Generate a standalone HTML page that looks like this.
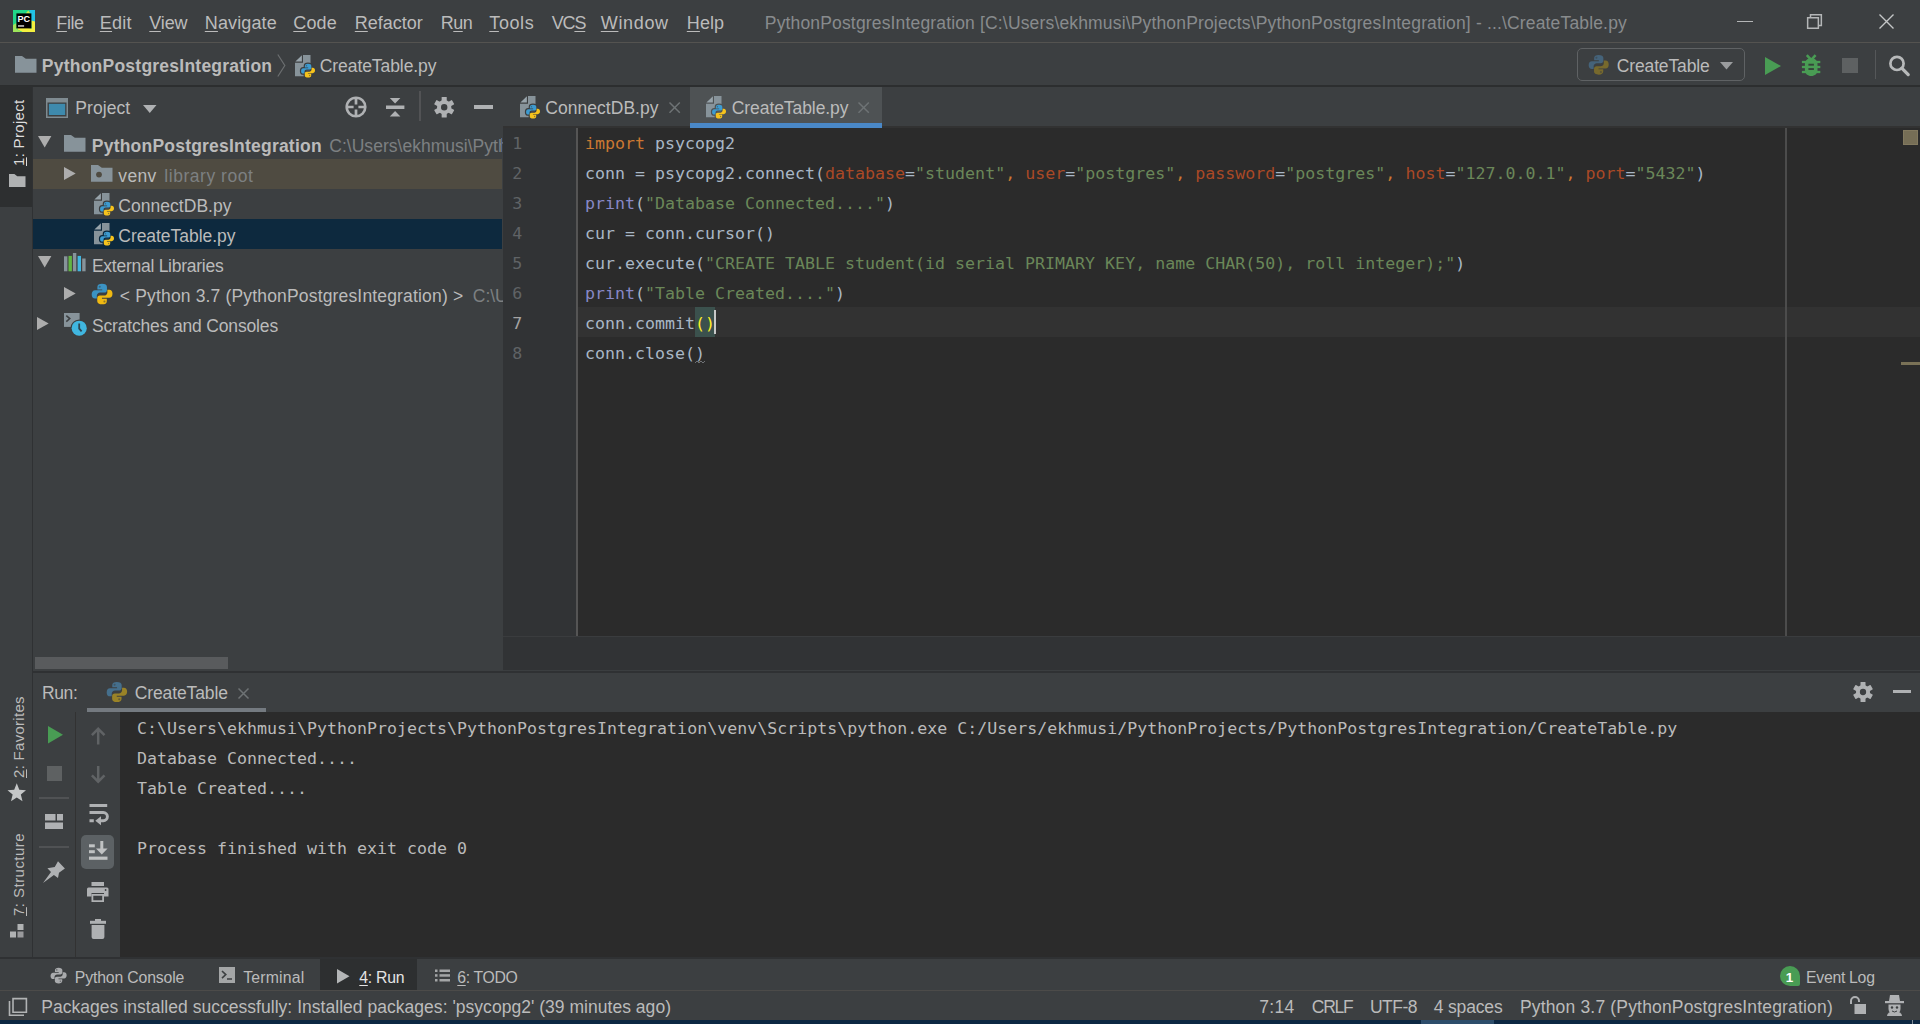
<!DOCTYPE html>
<html lang="en"><head><meta charset="utf-8"><title>PythonPostgresIntegration - CreateTable.py</title>
<style>
html,body{margin:0;padding:0}
body{width:1920px;height:1024px;overflow:hidden;position:relative;background:#3c3f41;font-family:"Liberation Sans",sans-serif;color:#bbb}
div,span,svg{position:absolute;box-sizing:border-box}
.t{white-space:pre}
.t u{text-decoration:underline;text-underline-offset:2px;text-decoration-thickness:1px}
.v{transform-origin:0 0;transform:rotate(-90deg)}
.i{overflow:visible}
.cl,.col{left:585px;margin-top:0.5px;height:30px;line-height:30px;font:16.6px/30px "DejaVu Sans Mono","Liberation Mono",monospace;color:#a9b7c6;white-space:pre;letter-spacing:.012px}
.cl span,.cl{position:absolute}.cl span{position:static}
.col{left:137px;color:#bbbbbb}
.ln{left:503px;margin-top:0.5px;width:30px;height:30px;font:16.6px/30px "DejaVu Sans Mono","Liberation Mono",monospace;color:#606366;padding-left:9.2px}
.ln.cur{color:#a4a3a3}
.br{color:#ffef28}
</style></head><body>

<!-- ===== menu bar ===== -->
<div id="menubar" style="left:0;top:0;width:1920px;height:42px;background:#3c3f41"></div>
<div style="left:0;top:42px;width:1920px;height:1px;background:#545350"></div>
<svg class="i" style="left:13px;top:10px" width="22" height="22" viewBox="0 0 22 22"><rect width="22" height="22" fill="#21d789"/><path fill="#22c3e6" d="M16.5 0H22V16L18 11Z"/><path fill="#f3ef3f" d="M22 11.5V22H9.5L5 19.8L3 16L18.6 18.4L18.4 10.5Z"/><path fill="#9fe55a" d="M0 15L3.4 13V18.5L8 22H0Z"/><path fill="#c7e84a" d="M12.6 3.4L15.3 0.6L17.5 3.4Z"/><rect x="3.4" y="3.4" width="15" height="15" fill="#000"/><rect x="5" y="15" width="6.1" height="1.9" fill="#a3a3a3"/><text x="4.4" y="12.1" font-family="Liberation Sans, sans-serif" font-size="9.8" font-weight="bold" fill="#ffffff" textLength="12.6" lengthAdjust="spacingAndGlyphs">PC</text></svg>
<span class="t" style="left:56.30px;top:12.26px;font-size:18px;line-height:23px;color:#bbbbbb;letter-spacing:-0.400px;"><u>F</u>ile</span><span class="t" style="left:99.80px;top:12.26px;font-size:18px;line-height:23px;color:#bbbbbb;letter-spacing:0.225px;"><u>E</u>dit</span><span class="t" style="left:149.30px;top:12.26px;font-size:18px;line-height:23px;color:#bbbbbb;letter-spacing:-0.150px;"><u>V</u>iew</span><span class="t" style="left:204.80px;top:12.26px;font-size:18px;line-height:23px;color:#bbbbbb;letter-spacing:0.113px;"><u>N</u>avigate</span><span class="t" style="left:293.30px;top:12.26px;font-size:18px;line-height:23px;color:#bbbbbb;letter-spacing:0.100px;"><u>C</u>ode</span><span class="t" style="left:354.80px;top:12.26px;font-size:18px;line-height:23px;color:#bbbbbb;letter-spacing:-0.012px;"><u>R</u>efactor</span><span class="t" style="left:440.80px;top:12.26px;font-size:18px;line-height:23px;color:#bbbbbb;letter-spacing:-0.533px;">R<u>u</u>n</span><span class="t" style="left:489.30px;top:12.26px;font-size:18px;line-height:23px;color:#bbbbbb;letter-spacing:0.580px;"><u>T</u>ools</span><span class="t" style="left:551.80px;top:12.26px;font-size:18px;line-height:23px;color:#bbbbbb;letter-spacing:-1.200px;">VC<u>S</u></span><span class="t" style="left:600.80px;top:12.26px;font-size:18px;line-height:23px;color:#bbbbbb;letter-spacing:0.650px;"><u>W</u>indow</span><span class="t" style="left:686.80px;top:12.26px;font-size:18px;line-height:23px;color:#bbbbbb;letter-spacing:0.100px;"><u>H</u>elp</span>
<span class="t" style="left:764.80px;top:12.44px;font-size:17.5px;line-height:23px;color:#888b8d;letter-spacing:0.159px;">PythonPostgresIntegration [C:\Users\ekhmusi\PythonProjects\PythonPostgresIntegration] - ...\CreateTable.py</span>
<div style="left:1737px;top:21.2px;width:16px;height:1.3px;background:#b4b6b7"></div>
<svg class="i" style="left:1807.3px;top:13.5px" width="15.3" height="15.3" viewBox="0 0 15.3 15.3"><path fill="none" stroke="#b4b6b7" stroke-width="1.5" d="M0.65 3.65H11.35V14.35H0.65ZM3.5 3.5V0.65H14.35V11.5H11.5"/></svg>
<svg class="i" style="left:1879px;top:14px" width="15" height="15" viewBox="0 0 15 15"><path fill="none" stroke="#c4c6c7" stroke-width="1.4" d="M0.5 0.5L14.5 14.5M14.5 0.5L0.5 14.5"/></svg>

<!-- ===== navigation bar ===== -->
<div id="navbar" style="left:0;top:43px;width:1920px;height:42px;background:#3c3f41"></div>
<svg class="i" style="left:15px;top:56px" width="21.5" height="16.8" viewBox="0 0 21.5 16.8"><path fill="#87939a" d="M0 0H7L10.8 2.8H21.5V16.8H0Z"/></svg>
<span class="t" style="left:41.80px;top:55.44px;font-size:17.5px;line-height:23px;color:#bbbbbb;font-weight:bold;letter-spacing:0.236px;">PythonPostgresIntegration</span>
<svg class="i" style="left:276.6px;top:53.5px" width="9" height="23" viewBox="0 0 9 23"><path fill="none" stroke="#6b6e70" stroke-width="1.2" d="M0.8 0.5L7.8 11.5L0.8 22.5"/></svg>
<svg class="i" style="left:295px;top:54.5px" width="21" height="23.5" viewBox="0 0 21 23.5"><path fill="#87939a" d="M8 0H15.5V21.3H0V7.8H8Z"/><path fill="#98a4ab" d="M6.9 0.3V6.4H0.4Z"/><g transform="translate(5.6,8.2) scale(0.93)"><g fill="#3c3f41" stroke="#3c3f41" stroke-width="2.6" stroke-linejoin="round"><path fill="#3c3f41" d="M7.9 0.6C5.9 0.6 4.6 1.4 4.6 2.9V4.6H8.1V5.3H2.9C1.4 5.3 0.5 6.5 0.5 8.3C0.5 10.1 1.4 11.2 2.9 11.2H4.2V9.2C4.2 7.9 5.3 6.9 6.6 6.9H9.6C10.7 6.9 11.5 6.1 11.5 5V2.9C11.5 1.5 10.2 0.6 7.9 0.6Z"/><path fill="#3c3f41" d="M8.1 15.4C10.1 15.4 11.4 14.6 11.4 13.1V11.4H7.9V10.7H13.1C14.6 10.7 15.5 9.5 15.5 7.7C15.5 5.9 14.6 4.8 13.1 4.8H11.8V6.8C11.8 8.1 10.7 9.1 9.4 9.1H6.4C5.3 9.1 4.5 9.9 4.5 11V13.1C4.5 14.5 5.8 15.4 8.1 15.4Z"/><circle cx="6.3" cy="2.7" r="0.75" fill="#3c3f41" opacity=".55"/><circle cx="9.7" cy="13.3" r="0.75" fill="#3c3f41" opacity=".55"/></g><path fill="#3d9bd0" d="M7.9 0.6C5.9 0.6 4.6 1.4 4.6 2.9V4.6H8.1V5.3H2.9C1.4 5.3 0.5 6.5 0.5 8.3C0.5 10.1 1.4 11.2 2.9 11.2H4.2V9.2C4.2 7.9 5.3 6.9 6.6 6.9H9.6C10.7 6.9 11.5 6.1 11.5 5V2.9C11.5 1.5 10.2 0.6 7.9 0.6Z"/><path fill="#f6c31c" d="M8.1 15.4C10.1 15.4 11.4 14.6 11.4 13.1V11.4H7.9V10.7H13.1C14.6 10.7 15.5 9.5 15.5 7.7C15.5 5.9 14.6 4.8 13.1 4.8H11.8V6.8C11.8 8.1 10.7 9.1 9.4 9.1H6.4C5.3 9.1 4.5 9.9 4.5 11V13.1C4.5 14.5 5.8 15.4 8.1 15.4Z"/><circle cx="6.3" cy="2.7" r="0.75" fill="#3c3f41" opacity=".55"/><circle cx="9.7" cy="13.3" r="0.75" fill="#3c3f41" opacity=".55"/></g></svg>
<span class="t" style="left:319.80px;top:55.44px;font-size:17.5px;line-height:23px;color:#bbbbbb;letter-spacing:-0.079px;">CreateTable.py</span>
<div style="left:1577px;top:48px;width:167.5px;height:33px;border:1.5px solid #5f6264;border-radius:5px;background:#3c3f41"></div>
<svg class="i" style="left:1588.3px;top:54px" width="21.4" height="21.6" viewBox="0 0 16 16"><path fill="#45637a" d="M7.9 0.6C5.9 0.6 4.6 1.4 4.6 2.9V4.6H8.1V5.3H2.9C1.4 5.3 0.5 6.5 0.5 8.3C0.5 10.1 1.4 11.2 2.9 11.2H4.2V9.2C4.2 7.9 5.3 6.9 6.6 6.9H9.6C10.7 6.9 11.5 6.1 11.5 5V2.9C11.5 1.5 10.2 0.6 7.9 0.6Z"/><path fill="#77692d" d="M8.1 15.4C10.1 15.4 11.4 14.6 11.4 13.1V11.4H7.9V10.7H13.1C14.6 10.7 15.5 9.5 15.5 7.7C15.5 5.9 14.6 4.8 13.1 4.8H11.8V6.8C11.8 8.1 10.7 9.1 9.4 9.1H6.4C5.3 9.1 4.5 9.9 4.5 11V13.1C4.5 14.5 5.8 15.4 8.1 15.4Z"/><circle cx="6.3" cy="2.7" r="0.75" fill="#3c3f41" opacity=".55"/><circle cx="9.7" cy="13.3" r="0.75" fill="#3c3f41" opacity=".55"/></svg>
<span class="t" style="left:1616.80px;top:55.44px;font-size:17.5px;line-height:23px;color:#bbbbbb;letter-spacing:-0.145px;">CreateTable</span>
<svg class="i" style="left:1720px;top:61.5px" width="13" height="7.4" viewBox="0 0 13 7.4"><path fill="#9a9c9e" d="M0 0H13L6.5 7.4Z"/></svg>
<svg class="i" style="left:1765px;top:57px" width="16" height="18" viewBox="0 0 16 18"><path fill="#499c54" d="M0 0L16 9L0 18Z"/></svg>
<svg class="i" style="left:1801px;top:54px" width="20" height="23" viewBox="0 0 20 23"><g fill="#499c54"><path d="M10.2 4C13.7 4 16.5 6.6 16.5 10V16.5C16.5 19.6 13.7 22 10.2 22C6.7 22 3.9 19.6 3.9 16.5V10C3.9 6.6 6.7 4 10.2 4Z"/><rect x="0.9" y="6.85" width="18.4" height="2.3"/><rect x="0.9" y="11.85" width="18.4" height="2.3"/><rect x="0.9" y="16.85" width="18.4" height="2.3"/></g><path stroke="#499c54" stroke-width="2.5" d="M5.8 1.1L10.2 5.8L14.6 1.1" fill="none"/><rect x="7.4" y="9.75" width="5.5" height="1.9" fill="#35443a"/><rect x="7.4" y="14.1" width="5.5" height="1.9" fill="#35443a"/></svg>
<div style="left:1842px;top:58px;width:16px;height:15px;background:#5e6162"></div>
<div style="left:1875px;top:50px;width:1px;height:29px;background:#555759"></div>
<svg class="i" style="left:1889px;top:55px" width="21" height="21" viewBox="0 0 21 21"><circle cx="8" cy="8.4" r="6.6" fill="none" stroke="#b7b9ba" stroke-width="2.7"/><path stroke="#b7b9ba" stroke-width="3.3" stroke-linecap="round" d="M13 13.4L19.2 19.6"/></svg>

<div style="left:0;top:85px;width:1920px;height:2px;background:#2c2e2f"></div>

<!-- ===== left tool strip ===== -->
<div id="leftstrip" style="left:0;top:87px;width:32px;height:870px;background:#3c3f41"></div>
<div style="left:32px;top:87px;width:1px;height:870px;background:#2f3133"></div>
<div style="left:0;top:86px;width:32px;height:121px;background:#2d2f30"></div>
<span class="t v" style="left:9.00px;top:165.70px;font-size:15px;line-height:20px;color:#dcdcdc;letter-spacing:0.310px;"><u>1</u>: Project</span>
<svg class="i" style="left:8.6px;top:174px" width="16.5" height="13" viewBox="0 0 21.5 16.8"><path fill="#b0b2b3" d="M0 0H7L10.8 2.8H21.5V16.8H0Z"/></svg>
<span class="t v" style="left:9.00px;top:778.00px;font-size:15px;line-height:20px;color:#bbbbbb;letter-spacing:0.292px;"><u>2</u>: Favorites</span>
<svg class="i" style="left:7px;top:783px" width="19.5" height="18.5" viewBox="0 0 20 18.5"><path fill="#c4c6c7" d="M10 0L12.6 6.6L19.5 7.1L14.2 11.6L15.9 18.5L10 14.7L4.1 18.5L5.8 11.6L0.5 7.1L7.4 6.6Z"/></svg>
<span class="t v" style="left:9.00px;top:916.00px;font-size:15px;line-height:20px;color:#bbbbbb;letter-spacing:0.458px;"><u>7</u>: Structure</span>
<svg class="i" style="left:10px;top:924px" width="14" height="13.5" viewBox="0 0 14 13.5"><g fill="#b0b2b3"><rect x="7.5" y="0" width="6" height="6"/><rect x="0" y="7.5" width="6" height="6"/><rect x="7.5" y="7.5" width="6" height="6" opacity=".8"/></g></svg>

<!-- ===== project tool window ===== -->
<div id="project" style="left:33px;top:87px;width:470px;height:584px;background:#3c3f41"></div>
<svg class="i" style="left:46px;top:98px" width="22" height="20" viewBox="0 0 22 20"><rect x="0.75" y="0.75" width="20.5" height="18.5" fill="#3c3f41" stroke="#7f8b91" stroke-width="1.5"/><rect x="0" y="0" width="22" height="4.5" fill="#7f8b91"/><rect x="2.9" y="5.8" width="16.3" height="11.2" fill="#3e8aad"/></svg>
<span class="t" style="left:75.30px;top:97.44px;font-size:17.5px;line-height:23px;color:#bbbbbb;letter-spacing:0.057px;">Project</span>
<svg class="i" style="left:142.5px;top:105px" width="13.5" height="8" viewBox="0 0 13.5 8"><path fill="#afb1b3" d="M0 0H13.5L6.75 8Z"/></svg>
<svg class="i" style="left:345px;top:96.1px" width="22" height="22" viewBox="0 0 22 22"><circle cx="11" cy="11" r="9.3" fill="none" stroke="#afb1b3" stroke-width="2.6"/><path stroke="#afb1b3" stroke-width="2.7" d="M11 1V8.6M11 13.4V21M1 11H8.6M13.4 11H21"/></svg>
<svg class="i" style="left:386px;top:97.7px" width="18.4" height="18.6" viewBox="0 0 18.4 18.6"><path fill="#afb1b3" d="M0 7.6H18.4V10.9H0ZM3.8 0H14.4L9.1 5.6ZM3.8 18.6H14.4L9.1 13Z"/></svg>
<div style="left:419px;top:91px;width:2px;height:30px;background:#525355"></div>
<svg class="i" style="left:433.9px;top:96.8px" width="20.4" height="20.4" viewBox="0 0 20 20"><g fill="#afb1b3"><rect x="7.5" y="0" width="5" height="6" rx=".5" transform="rotate(0 10 10)"/><rect x="7.5" y="0" width="5" height="6" rx=".5" transform="rotate(60 10 10)"/><rect x="7.5" y="0" width="5" height="6" rx=".5" transform="rotate(120 10 10)"/><rect x="7.5" y="0" width="5" height="6" rx=".5" transform="rotate(180 10 10)"/><rect x="7.5" y="0" width="5" height="6" rx=".5" transform="rotate(240 10 10)"/><rect x="7.5" y="0" width="5" height="6" rx=".5" transform="rotate(300 10 10)"/></g><circle cx="10" cy="10" r="5.1" fill="none" stroke="#afb1b3" stroke-width="3.9"/></svg>
<div style="left:474px;top:105.2px;width:18.5px;height:3.4px;background:#afb1b3"></div>

<div style="left:33px;top:159px;width:469px;height:30px;background:#4f4b41"></div>
<div style="left:33px;top:219px;width:469px;height:30px;background:#0d293e"></div>
<svg class="i" style="left:37.6px;top:136.2px" width="13.4" height="11.6" viewBox="0 0 13.4 11.6"><path fill="#adadad" d="M0 0H13.4L6.7 11.6Z"/></svg>
<svg class="i" style="left:64.3px;top:135.2px" width="21.5" height="16.8" viewBox="0 0 21.5 16.8"><path fill="#87939a" d="M0 0H7L10.8 2.8H21.5V16.8H0Z"/></svg>
<span class="t" style="left:91.80px;top:135.44px;font-size:17.5px;line-height:23px;color:#bbbbbb;font-weight:bold;letter-spacing:0.216px;">PythonPostgresIntegration</span>
<div style="left:328px;top:129px;width:175px;height:30px;overflow:hidden"><span class="t" style="left:1.30px;top:6.44px;font-size:17.5px;line-height:23px;color:#7d8082;letter-spacing:0.019px;">C:\Users\ekhmusi\Pyth</span></div>
<svg class="i" style="left:64px;top:167px" width="11.7" height="13" viewBox="0 0 11.7 13"><path fill="#adadad" d="M0 0L11.7 6.5L0 13Z"/></svg>
<svg class="i" style="left:91.2px;top:165px" width="21.5" height="16.8" viewBox="0 0 21.5 16.8"><path fill="#87939a" d="M0 0H7L10.8 2.8H21.5V16.8H0Z"/><circle cx="8" cy="9.6" r="2.9" fill="#4f4b41"/></svg>
<span class="t" style="left:118.30px;top:165.44px;font-size:17.5px;line-height:23px;color:#bbbbbb;letter-spacing:0.350px;">venv</span>
<span class="t" style="left:164.30px;top:165.44px;font-size:17.5px;line-height:23px;color:#7d8082;letter-spacing:0.533px;">library root</span>
<svg class="i" style="left:94.25px;top:193.3px" width="21" height="23.5" viewBox="0 0 21 23.5"><path fill="#87939a" d="M8 0H15.5V21.3H0V7.8H8Z"/><path fill="#98a4ab" d="M6.9 0.3V6.4H0.4Z"/><g transform="translate(5.6,8.2) scale(0.93)"><g fill="#3c3f41" stroke="#3c3f41" stroke-width="2.6" stroke-linejoin="round"><path fill="#3c3f41" d="M7.9 0.6C5.9 0.6 4.6 1.4 4.6 2.9V4.6H8.1V5.3H2.9C1.4 5.3 0.5 6.5 0.5 8.3C0.5 10.1 1.4 11.2 2.9 11.2H4.2V9.2C4.2 7.9 5.3 6.9 6.6 6.9H9.6C10.7 6.9 11.5 6.1 11.5 5V2.9C11.5 1.5 10.2 0.6 7.9 0.6Z"/><path fill="#3c3f41" d="M8.1 15.4C10.1 15.4 11.4 14.6 11.4 13.1V11.4H7.9V10.7H13.1C14.6 10.7 15.5 9.5 15.5 7.7C15.5 5.9 14.6 4.8 13.1 4.8H11.8V6.8C11.8 8.1 10.7 9.1 9.4 9.1H6.4C5.3 9.1 4.5 9.9 4.5 11V13.1C4.5 14.5 5.8 15.4 8.1 15.4Z"/><circle cx="6.3" cy="2.7" r="0.75" fill="#3c3f41" opacity=".55"/><circle cx="9.7" cy="13.3" r="0.75" fill="#3c3f41" opacity=".55"/></g><path fill="#3d9bd0" d="M7.9 0.6C5.9 0.6 4.6 1.4 4.6 2.9V4.6H8.1V5.3H2.9C1.4 5.3 0.5 6.5 0.5 8.3C0.5 10.1 1.4 11.2 2.9 11.2H4.2V9.2C4.2 7.9 5.3 6.9 6.6 6.9H9.6C10.7 6.9 11.5 6.1 11.5 5V2.9C11.5 1.5 10.2 0.6 7.9 0.6Z"/><path fill="#f6c31c" d="M8.1 15.4C10.1 15.4 11.4 14.6 11.4 13.1V11.4H7.9V10.7H13.1C14.6 10.7 15.5 9.5 15.5 7.7C15.5 5.9 14.6 4.8 13.1 4.8H11.8V6.8C11.8 8.1 10.7 9.1 9.4 9.1H6.4C5.3 9.1 4.5 9.9 4.5 11V13.1C4.5 14.5 5.8 15.4 8.1 15.4Z"/><circle cx="6.3" cy="2.7" r="0.75" fill="#3c3f41" opacity=".55"/><circle cx="9.7" cy="13.3" r="0.75" fill="#3c3f41" opacity=".55"/></g></svg>
<span class="t" style="left:118.30px;top:195.44px;font-size:17.5px;line-height:23px;color:#bbbbbb;letter-spacing:0.033px;">ConnectDB.py</span>
<svg class="i" style="left:94.25px;top:223.3px" width="21" height="23.5" viewBox="0 0 21 23.5"><path fill="#87939a" d="M8 0H15.5V21.3H0V7.8H8Z"/><path fill="#98a4ab" d="M6.9 0.3V6.4H0.4Z"/><g transform="translate(5.6,8.2) scale(0.93)"><g fill="#0d293e" stroke="#0d293e" stroke-width="2.6" stroke-linejoin="round"><path fill="#0d293e" d="M7.9 0.6C5.9 0.6 4.6 1.4 4.6 2.9V4.6H8.1V5.3H2.9C1.4 5.3 0.5 6.5 0.5 8.3C0.5 10.1 1.4 11.2 2.9 11.2H4.2V9.2C4.2 7.9 5.3 6.9 6.6 6.9H9.6C10.7 6.9 11.5 6.1 11.5 5V2.9C11.5 1.5 10.2 0.6 7.9 0.6Z"/><path fill="#0d293e" d="M8.1 15.4C10.1 15.4 11.4 14.6 11.4 13.1V11.4H7.9V10.7H13.1C14.6 10.7 15.5 9.5 15.5 7.7C15.5 5.9 14.6 4.8 13.1 4.8H11.8V6.8C11.8 8.1 10.7 9.1 9.4 9.1H6.4C5.3 9.1 4.5 9.9 4.5 11V13.1C4.5 14.5 5.8 15.4 8.1 15.4Z"/><circle cx="6.3" cy="2.7" r="0.75" fill="#3c3f41" opacity=".55"/><circle cx="9.7" cy="13.3" r="0.75" fill="#3c3f41" opacity=".55"/></g><path fill="#3d9bd0" d="M7.9 0.6C5.9 0.6 4.6 1.4 4.6 2.9V4.6H8.1V5.3H2.9C1.4 5.3 0.5 6.5 0.5 8.3C0.5 10.1 1.4 11.2 2.9 11.2H4.2V9.2C4.2 7.9 5.3 6.9 6.6 6.9H9.6C10.7 6.9 11.5 6.1 11.5 5V2.9C11.5 1.5 10.2 0.6 7.9 0.6Z"/><path fill="#f6c31c" d="M8.1 15.4C10.1 15.4 11.4 14.6 11.4 13.1V11.4H7.9V10.7H13.1C14.6 10.7 15.5 9.5 15.5 7.7C15.5 5.9 14.6 4.8 13.1 4.8H11.8V6.8C11.8 8.1 10.7 9.1 9.4 9.1H6.4C5.3 9.1 4.5 9.9 4.5 11V13.1C4.5 14.5 5.8 15.4 8.1 15.4Z"/><circle cx="6.3" cy="2.7" r="0.75" fill="#3c3f41" opacity=".55"/><circle cx="9.7" cy="13.3" r="0.75" fill="#3c3f41" opacity=".55"/></g></svg>
<span class="t" style="left:118.30px;top:225.44px;font-size:17.5px;line-height:23px;color:#bbbbbb;letter-spacing:-0.043px;">CreateTable.py</span>
<svg class="i" style="left:37.6px;top:255.9px" width="13.4" height="11.6" viewBox="0 0 13.4 11.6"><path fill="#adadad" d="M0 0H13.4L6.7 11.6Z"/></svg>
<svg class="i" style="left:64.3px;top:253.3px" width="21.6" height="18.3" viewBox="0 0 21.6 18.3"><g fill="#87939a"><rect x="0" y="3.3" width="3.4" height="15"/><rect x="8.9" y="0" width="3.4" height="18.3"/><rect x="18.2" y="5.5" width="3.4" height="12.8"/></g><rect x="4.5" y="2.9" width="3.4" height="15.4" fill="#62b543"/><rect x="13.6" y="2.9" width="3.4" height="15.4" fill="#40b6e0"/></svg>
<span class="t" style="left:91.90px;top:255.44px;font-size:17.5px;line-height:23px;color:#bbbbbb;letter-spacing:-0.256px;">External Libraries</span>
<svg class="i" style="left:64px;top:287px" width="11.7" height="13" viewBox="0 0 11.7 13"><path fill="#adadad" d="M0 0L11.7 6.5L0 13Z"/></svg>
<svg class="i" style="left:91px;top:283px" width="22.2" height="22.2" viewBox="0 0 16 16"><path fill="#3b93c3" d="M7.9 0.6C5.9 0.6 4.6 1.4 4.6 2.9V4.6H8.1V5.3H2.9C1.4 5.3 0.5 6.5 0.5 8.3C0.5 10.1 1.4 11.2 2.9 11.2H4.2V9.2C4.2 7.9 5.3 6.9 6.6 6.9H9.6C10.7 6.9 11.5 6.1 11.5 5V2.9C11.5 1.5 10.2 0.6 7.9 0.6Z"/><path fill="#f0b912" d="M8.1 15.4C10.1 15.4 11.4 14.6 11.4 13.1V11.4H7.9V10.7H13.1C14.6 10.7 15.5 9.5 15.5 7.7C15.5 5.9 14.6 4.8 13.1 4.8H11.8V6.8C11.8 8.1 10.7 9.1 9.4 9.1H6.4C5.3 9.1 4.5 9.9 4.5 11V13.1C4.5 14.5 5.8 15.4 8.1 15.4Z"/><circle cx="6.3" cy="2.7" r="0.75" fill="#3c3f41" opacity=".55"/><circle cx="9.7" cy="13.3" r="0.75" fill="#3c3f41" opacity=".55"/></svg>
<span class="t" style="left:119.80px;top:285.44px;font-size:17.5px;line-height:23px;color:#bbbbbb;letter-spacing:0.164px;">&lt; Python 3.7 (PythonPostgresIntegration) &gt;</span>
<div style="left:470px;top:279px;width:33px;height:30px;overflow:hidden"><span class="t" style="left:2.80px;top:6.44px;font-size:17.5px;line-height:23px;color:#7d8082;letter-spacing:-0.025px;">C:\U</span></div>
<svg class="i" style="left:37px;top:316.5px" width="11.7" height="13" viewBox="0 0 11.7 13"><path fill="#adadad" d="M0 0L11.7 6.5L0 13Z"/></svg>
<svg class="i" style="left:64.3px;top:313.3px" width="23" height="23" viewBox="0 0 23 23"><rect x="0" y="0" width="15.6" height="13.9" fill="#87939a"/><path fill="none" stroke="#3c3f41" stroke-width="1.5" d="M2.3 2.6L5.8 5.6L2.3 8.6"/><circle cx="15.2" cy="15.2" r="8.7" fill="#3c3f41"/><circle cx="15.2" cy="15.2" r="7.55" fill="#40b6e0"/><path fill="none" stroke="#2d4552" stroke-width="1.8" d="M15.2 10.6V15.6L17.6 18.4"/></svg>
<span class="t" style="left:91.90px;top:315.44px;font-size:17.5px;line-height:23px;color:#bbbbbb;letter-spacing:-0.164px;">Scratches and Consoles</span>
<div style="left:35px;top:657px;width:193px;height:12px;background:#595b5d"></div>

<!-- ===== editor ===== -->
<div id="tabs" style="left:503px;top:87px;width:1417px;height:39px;background:#3c3f41"></div>
<div style="left:503px;top:126px;width:1417px;height:2px;background:#323232"></div>
<div style="left:690px;top:87px;width:192px;height:37px;background:#4e5254"></div>
<div style="left:690px;top:123px;width:192px;height:5px;background:#4a88c7"></div>
<svg class="i" style="left:520px;top:95.5px" width="21" height="23.5" viewBox="0 0 21 23.5"><path fill="#87939a" d="M8 0H15.5V21.3H0V7.8H8Z"/><path fill="#98a4ab" d="M6.9 0.3V6.4H0.4Z"/><g transform="translate(5.6,8.2) scale(0.93)"><g fill="#3c3f41" stroke="#3c3f41" stroke-width="2.6" stroke-linejoin="round"><path fill="#3c3f41" d="M7.9 0.6C5.9 0.6 4.6 1.4 4.6 2.9V4.6H8.1V5.3H2.9C1.4 5.3 0.5 6.5 0.5 8.3C0.5 10.1 1.4 11.2 2.9 11.2H4.2V9.2C4.2 7.9 5.3 6.9 6.6 6.9H9.6C10.7 6.9 11.5 6.1 11.5 5V2.9C11.5 1.5 10.2 0.6 7.9 0.6Z"/><path fill="#3c3f41" d="M8.1 15.4C10.1 15.4 11.4 14.6 11.4 13.1V11.4H7.9V10.7H13.1C14.6 10.7 15.5 9.5 15.5 7.7C15.5 5.9 14.6 4.8 13.1 4.8H11.8V6.8C11.8 8.1 10.7 9.1 9.4 9.1H6.4C5.3 9.1 4.5 9.9 4.5 11V13.1C4.5 14.5 5.8 15.4 8.1 15.4Z"/><circle cx="6.3" cy="2.7" r="0.75" fill="#3c3f41" opacity=".55"/><circle cx="9.7" cy="13.3" r="0.75" fill="#3c3f41" opacity=".55"/></g><path fill="#3d9bd0" d="M7.9 0.6C5.9 0.6 4.6 1.4 4.6 2.9V4.6H8.1V5.3H2.9C1.4 5.3 0.5 6.5 0.5 8.3C0.5 10.1 1.4 11.2 2.9 11.2H4.2V9.2C4.2 7.9 5.3 6.9 6.6 6.9H9.6C10.7 6.9 11.5 6.1 11.5 5V2.9C11.5 1.5 10.2 0.6 7.9 0.6Z"/><path fill="#f6c31c" d="M8.1 15.4C10.1 15.4 11.4 14.6 11.4 13.1V11.4H7.9V10.7H13.1C14.6 10.7 15.5 9.5 15.5 7.7C15.5 5.9 14.6 4.8 13.1 4.8H11.8V6.8C11.8 8.1 10.7 9.1 9.4 9.1H6.4C5.3 9.1 4.5 9.9 4.5 11V13.1C4.5 14.5 5.8 15.4 8.1 15.4Z"/><circle cx="6.3" cy="2.7" r="0.75" fill="#3c3f41" opacity=".55"/><circle cx="9.7" cy="13.3" r="0.75" fill="#3c3f41" opacity=".55"/></g></svg>
<span class="t" style="left:545.30px;top:97.44px;font-size:17.5px;line-height:23px;color:#bbbbbb;letter-spacing:0.033px;">ConnectDB.py</span>
<svg class="i" style="left:668.5px;top:101.6px" width="11.3" height="11.3" viewBox="0 0 11.3 11.3"><path stroke="#6e7375" stroke-width="1.5" fill="none" d="M0.5 0.5L10.8 10.8M10.8 0.5L0.5 10.8"/></svg>
<svg class="i" style="left:706px;top:95.5px" width="21" height="23.5" viewBox="0 0 21 23.5"><path fill="#87939a" d="M8 0H15.5V21.3H0V7.8H8Z"/><path fill="#98a4ab" d="M6.9 0.3V6.4H0.4Z"/><g transform="translate(5.6,8.2) scale(0.93)"><g fill="#4e5254" stroke="#4e5254" stroke-width="2.6" stroke-linejoin="round"><path fill="#4e5254" d="M7.9 0.6C5.9 0.6 4.6 1.4 4.6 2.9V4.6H8.1V5.3H2.9C1.4 5.3 0.5 6.5 0.5 8.3C0.5 10.1 1.4 11.2 2.9 11.2H4.2V9.2C4.2 7.9 5.3 6.9 6.6 6.9H9.6C10.7 6.9 11.5 6.1 11.5 5V2.9C11.5 1.5 10.2 0.6 7.9 0.6Z"/><path fill="#4e5254" d="M8.1 15.4C10.1 15.4 11.4 14.6 11.4 13.1V11.4H7.9V10.7H13.1C14.6 10.7 15.5 9.5 15.5 7.7C15.5 5.9 14.6 4.8 13.1 4.8H11.8V6.8C11.8 8.1 10.7 9.1 9.4 9.1H6.4C5.3 9.1 4.5 9.9 4.5 11V13.1C4.5 14.5 5.8 15.4 8.1 15.4Z"/><circle cx="6.3" cy="2.7" r="0.75" fill="#3c3f41" opacity=".55"/><circle cx="9.7" cy="13.3" r="0.75" fill="#3c3f41" opacity=".55"/></g><path fill="#3d9bd0" d="M7.9 0.6C5.9 0.6 4.6 1.4 4.6 2.9V4.6H8.1V5.3H2.9C1.4 5.3 0.5 6.5 0.5 8.3C0.5 10.1 1.4 11.2 2.9 11.2H4.2V9.2C4.2 7.9 5.3 6.9 6.6 6.9H9.6C10.7 6.9 11.5 6.1 11.5 5V2.9C11.5 1.5 10.2 0.6 7.9 0.6Z"/><path fill="#f6c31c" d="M8.1 15.4C10.1 15.4 11.4 14.6 11.4 13.1V11.4H7.9V10.7H13.1C14.6 10.7 15.5 9.5 15.5 7.7C15.5 5.9 14.6 4.8 13.1 4.8H11.8V6.8C11.8 8.1 10.7 9.1 9.4 9.1H6.4C5.3 9.1 4.5 9.9 4.5 11V13.1C4.5 14.5 5.8 15.4 8.1 15.4Z"/><circle cx="6.3" cy="2.7" r="0.75" fill="#3c3f41" opacity=".55"/><circle cx="9.7" cy="13.3" r="0.75" fill="#3c3f41" opacity=".55"/></g></svg>
<span class="t" style="left:731.80px;top:97.44px;font-size:17.5px;line-height:23px;color:#bbbbbb;letter-spacing:-0.079px;">CreateTable.py</span>
<svg class="i" style="left:858.4px;top:101.6px" width="11.3" height="11.3" viewBox="0 0 11.3 11.3"><path stroke="#6e7375" stroke-width="1.5" fill="none" d="M0.5 0.5L10.8 10.8M10.8 0.5L0.5 10.8"/></svg>

<div id="editor" style="left:503px;top:128px;width:1417px;height:508px;background:#2b2b2b"></div>
<div style="left:578px;top:307px;width:1342px;height:30px;background:#323232"></div>
<div style="left:695px;top:307px;width:20px;height:30px;background:#3b514d"></div>
<div id="gutter" style="left:503px;top:128px;width:73px;height:508px;background:#313335"></div>
<div style="left:576px;top:128px;width:2px;height:508px;background:#555555"></div>
<div style="left:501px;top:138px;width:1px;height:14px;background:#56688a"></div>
<div style="left:1785px;top:128px;width:2px;height:508px;background:#4c4c4c"></div>
<div class="ln" style="top:128px">1</div><div class="ln" style="top:158px">2</div><div class="ln" style="top:188px">3</div><div class="ln" style="top:218px">4</div><div class="ln" style="top:248px">5</div><div class="ln" style="top:278px">6</div><div class="ln cur" style="top:308px">7</div><div class="ln" style="top:338px">8</div>
<div class="cl" style="top:128px"><span style="color:#cc7832">import</span> psycopg2</div><div class="cl" style="top:158px">conn = psycopg2.connect(<span style="color:#aa4926">database</span>=<span style="color:#6a8759">"student"</span><span style="color:#cc7832">,</span> <span style="color:#aa4926">user</span>=<span style="color:#6a8759">"postgres"</span><span style="color:#cc7832">,</span> <span style="color:#aa4926">password</span>=<span style="color:#6a8759">"postgres"</span><span style="color:#cc7832">,</span> <span style="color:#aa4926">host</span>=<span style="color:#6a8759">"127.0.0.1"</span><span style="color:#cc7832">,</span> <span style="color:#aa4926">port</span>=<span style="color:#6a8759">"5432"</span>)</div><div class="cl" style="top:188px"><span style="color:#8888c6">print</span>(<span style="color:#6a8759">"Database Connected...."</span>)</div><div class="cl" style="top:218px">cur = conn.cursor()</div><div class="cl" style="top:248px">cur.execute(<span style="color:#6a8759">"CREATE TABLE student(id serial PRIMARY KEY, name CHAR(50), roll integer);"</span>)</div><div class="cl" style="top:278px"><span style="color:#8888c6">print</span>(<span style="color:#6a8759">"Table Created...."</span>)</div><div class="cl" style="top:308px">conn.commit<span class="br">()</span></div><div class="cl" style="top:338px">conn.close()</div>
<div style="left:713.5px;top:310px;width:2.5px;height:24px;background:#c8c8c8"></div>
<svg class="i" style="left:695px;top:360px" width="11" height="4" viewBox="0 0 11 4"><path fill="none" stroke="#6f7276" stroke-width="1" d="M0 3L2 1L4 3L6 1L8 3L10 1"/></svg>
<div style="left:1903px;top:130px;width:15px;height:15px;background:#766e56;border:1px solid #82795f"></div>
<div style="left:1901px;top:362px;width:19px;height:3px;background:#7a7257"></div>
<div style="left:503px;top:636px;width:1417px;height:34px;background:#313335"></div>
<div style="left:503px;top:670px;width:1417px;height:1px;background:#3b3e40"></div>
<div style="left:503px;top:636px;width:1417px;height:1px;background:#3a3c3e"></div>

<div style="left:33px;top:671px;width:1887px;height:2px;background:#2f3133"></div>

<!-- ===== run tool window ===== -->
<div id="runhead" style="left:33px;top:673px;width:1887px;height:39px;background:#3c3f41"></div>
<span class="t" style="left:42.00px;top:682.44px;font-size:17.5px;line-height:23px;color:#bbbbbb;letter-spacing:-0.375px;">Run:</span>
<svg class="i" style="left:106px;top:681px" width="21.8" height="22" viewBox="0 0 16 16"><path fill="#456f8c" d="M7.9 0.6C5.9 0.6 4.6 1.4 4.6 2.9V4.6H8.1V5.3H2.9C1.4 5.3 0.5 6.5 0.5 8.3C0.5 10.1 1.4 11.2 2.9 11.2H4.2V9.2C4.2 7.9 5.3 6.9 6.6 6.9H9.6C10.7 6.9 11.5 6.1 11.5 5V2.9C11.5 1.5 10.2 0.6 7.9 0.6Z"/><path fill="#9a8327" d="M8.1 15.4C10.1 15.4 11.4 14.6 11.4 13.1V11.4H7.9V10.7H13.1C14.6 10.7 15.5 9.5 15.5 7.7C15.5 5.9 14.6 4.8 13.1 4.8H11.8V6.8C11.8 8.1 10.7 9.1 9.4 9.1H6.4C5.3 9.1 4.5 9.9 4.5 11V13.1C4.5 14.5 5.8 15.4 8.1 15.4Z"/><circle cx="6.3" cy="2.7" r="0.75" fill="#3c3f41" opacity=".55"/><circle cx="9.7" cy="13.3" r="0.75" fill="#3c3f41" opacity=".55"/></svg>
<span class="t" style="left:134.70px;top:682.44px;font-size:17.5px;line-height:23px;color:#bbbbbb;letter-spacing:-0.109px;">CreateTable</span>
<svg class="i" style="left:237.5px;top:687.5px" width="11" height="11" viewBox="0 0 11 11"><path stroke="#6e7375" stroke-width="1.5" fill="none" d="M0.5 0.5L10.5 10.5M10.5 0.5L0.5 10.5"/></svg>
<div style="left:87px;top:708px;width:178.5px;height:4px;background:#747a80"></div>
<svg class="i" style="left:1853.1px;top:682px" width="20" height="20" viewBox="0 0 20 20"><g fill="#afb1b3"><rect x="7.5" y="0" width="5" height="6" rx=".5" transform="rotate(0 10 10)"/><rect x="7.5" y="0" width="5" height="6" rx=".5" transform="rotate(60 10 10)"/><rect x="7.5" y="0" width="5" height="6" rx=".5" transform="rotate(120 10 10)"/><rect x="7.5" y="0" width="5" height="6" rx=".5" transform="rotate(180 10 10)"/><rect x="7.5" y="0" width="5" height="6" rx=".5" transform="rotate(240 10 10)"/><rect x="7.5" y="0" width="5" height="6" rx=".5" transform="rotate(300 10 10)"/></g><circle cx="10" cy="10" r="5.1" fill="none" stroke="#afb1b3" stroke-width="3.9"/></svg>
<div style="left:1893px;top:690px;width:18px;height:3px;background:#afb1b3"></div>

<div style="left:75px;top:712px;width:1px;height:245px;background:#323232"></div>
<div id="console" style="left:120px;top:712px;width:1800px;height:245px;background:#2b2b2b"></div>
<div class="col" style="top:713px">C:\Users\ekhmusi\PythonProjects\PythonPostgresIntegration\venv\Scripts\python.exe C:/Users/ekhmusi/PythonProjects/PythonPostgresIntegration/CreateTable.py</div><div class="col" style="top:743px">Database Connected....</div><div class="col" style="top:773px">Table Created....</div><div class="col" style="top:803px"></div><div class="col" style="top:833px">Process finished with exit code 0</div>
<svg class="i" style="left:47.5px;top:725.5px" width="15" height="17.5" viewBox="0 0 15 17.5"><path fill="#499c54" d="M0 0L15 8.75L0 17.5Z"/></svg>
<div style="left:46.5px;top:766px;width:15px;height:14.5px;background:#5e6162"></div>
<div style="left:39px;top:797px;width:30px;height:2px;background:#505254"></div>
<svg class="i" style="left:45px;top:814px" width="18" height="15.5" viewBox="0 0 18 15.5"><g fill="#afb1b3"><rect x="0" y="0" width="10.5" height="6.5"/><rect x="12" y="0" width="6" height="6.5"/><rect x="0" y="8.5" width="18" height="6.5"/></g></svg>
<div style="left:39px;top:846px;width:30px;height:2px;background:#505254"></div>
<svg class="i" style="left:43px;top:861px" width="22" height="22.2" viewBox="0 0 22 22.2"><path fill="#afb1b3" d="M15 0.25L21.9 7.6L16 11.8L15 17L10.9 14L0 22.1L8 11.1L4.4 7.3L11.75 5.95Z"/></svg>
<svg class="i" style="left:91px;top:726.5px" width="14.4" height="17.5" viewBox="0 0 14.4 17.5"><path fill="none" stroke="#606365" stroke-width="2.5" d="M7.2 17.5V1.8M0.9 8.2L7.2 1.8L13.5 8.2"/></svg>
<svg class="i" style="left:91px;top:765.5px" width="14.4" height="17.5" viewBox="0 0 14.4 17.5"><path fill="none" stroke="#606365" stroke-width="2.5" d="M7.2 0V15.7M0.9 9.3L7.2 15.7L13.5 9.3"/></svg>
<svg class="i" style="left:88.8px;top:804px" width="20" height="21" viewBox="0 0 20 21"><g fill="none" stroke="#afb1b3" stroke-width="2.9"><path d="M0.5 1.5H18.2M0.5 8.5H14.3A4.1 4.1 0 0 1 14.3 16.7H10"/></g><path fill="#afb1b3" d="M6.3 16.7L12 12.2V21.2ZM0.5 15.2H4.8V18.2H0.5Z"/></svg>
<div style="left:81px;top:835.2px;width:33.2px;height:33.6px;background:#5c6164;border-radius:5px"></div>
<svg class="i" style="left:88.8px;top:841.3px" width="19" height="19" viewBox="0 0 19 19"><g fill="#c0c2c3"><rect x="0" y="3.3" width="5.8" height="3"/><rect x="0" y="9.2" width="5.8" height="3"/><rect x="0" y="15.6" width="18.5" height="3.2"/><path d="M11.3 0H14.3V7.6H18.6L12.8 13.6L7 7.6H11.3Z"/></g></svg>
<svg class="i" style="left:87px;top:882px" width="21.5" height="20" viewBox="0 0 21.5 20"><g fill="#afb1b3"><rect x="4.5" y="0" width="12.5" height="4"/><path d="M1.5 5.5H20A1.5 1.5 0 0 1 21.5 7V14.5H17V11H4.5V14.5H0V7A1.5 1.5 0 0 1 1.5 5.5Z"/><path d="M4.5 12H17V20H4.5ZM6.3 13.8V18.2H15.2V13.8Z" fill-rule="evenodd"/></g><circle cx="18.6" cy="8" r="0.9" fill="#3c3f41"/></svg>
<svg class="i" style="left:90px;top:919px" width="16" height="20" viewBox="0 0 16 20"><g fill="#afb1b3"><rect x="5" y="0" width="6" height="2"/><rect x="0" y="1.8" width="16" height="3"/><path d="M1.6 6H14.4V18A2 2 0 0 1 12.4 20H3.6A2 2 0 0 1 1.6 18Z"/></g></svg>

<div style="left:0px;top:957px;width:1920px;height:2px;background:#2f3133"></div>

<!-- ===== bottom tool strip ===== -->
<div id="bottomstrip" style="left:0;top:959px;width:1920px;height:31px;background:#3c3f41"></div>
<div style="left:319.5px;top:959px;width:97.5px;height:31px;background:#2d2f30"></div>
<svg class="i" style="left:50.3px;top:967px" width="17.2" height="17.2" viewBox="0 0 16 16"><path fill="#a9abad" d="M7.9 0.6C5.9 0.6 4.6 1.4 4.6 2.9V4.6H8.1V5.3H2.9C1.4 5.3 0.5 6.5 0.5 8.3C0.5 10.1 1.4 11.2 2.9 11.2H4.2V9.2C4.2 7.9 5.3 6.9 6.6 6.9H9.6C10.7 6.9 11.5 6.1 11.5 5V2.9C11.5 1.5 10.2 0.6 7.9 0.6Z"/><path fill="#a9abad" d="M8.1 15.4C10.1 15.4 11.4 14.6 11.4 13.1V11.4H7.9V10.7H13.1C14.6 10.7 15.5 9.5 15.5 7.7C15.5 5.9 14.6 4.8 13.1 4.8H11.8V6.8C11.8 8.1 10.7 9.1 9.4 9.1H6.4C5.3 9.1 4.5 9.9 4.5 11V13.1C4.5 14.5 5.8 15.4 8.1 15.4Z"/><circle cx="6.3" cy="2.7" r="0.75" fill="#3c3f41" opacity=".55"/><circle cx="9.7" cy="13.3" r="0.75" fill="#3c3f41" opacity=".55"/></svg>
<span class="t" style="left:74.80px;top:967.03px;font-size:15.8px;line-height:21px;color:#bbbbbb;letter-spacing:-0.150px;">Python Console</span>
<svg class="i" style="left:219px;top:967px" width="16" height="16" viewBox="0 0 16 16"><rect width="16" height="16" fill="#a4a6a7"/><path fill="none" stroke="#3c3f41" stroke-width="1.6" d="M3 4L6.8 7.6L3 11.2M8 12H13"/></svg>
<span class="t" style="left:243.30px;top:967.03px;font-size:15.8px;line-height:21px;color:#bbbbbb;letter-spacing:0.175px;">Terminal</span>
<svg class="i" style="left:337px;top:968.5px" width="12.5" height="14.5" viewBox="0 0 12.5 14.5"><path fill="#b4b6b7" d="M0 0L12.5 7.25L0 14.5Z"/></svg>
<span class="t" style="left:359.30px;top:967.03px;font-size:15.8px;line-height:21px;color:#e4e4e4;letter-spacing:-0.267px;"><u>4</u>: Run</span>
<svg class="i" style="left:435px;top:969px" width="15" height="13" viewBox="0 0 15 13"><g fill="#a4a6a7"><rect x="0" y="0.5" width="2.5" height="2.5"/><rect x="4.5" y="0.5" width="10.5" height="2.5"/><rect x="0" y="5.2" width="2.5" height="2.5"/><rect x="4.5" y="5.2" width="10.5" height="2.5"/><rect x="0" y="10" width="2.5" height="2.5"/><rect x="4.5" y="10" width="10.5" height="2.5"/></g></svg>
<span class="t" style="left:457.30px;top:967.03px;font-size:15.8px;line-height:21px;color:#bbbbbb;letter-spacing:-0.371px;"><u>6</u>: TODO</span>
<div style="left:1780px;top:966px;width:20px;height:20px;border-radius:10px 10px 2px 10px;background:#499c54"></div>
<span class="t" style="left:1785.80px;top:968.82px;font-size:13.5px;line-height:18px;color:#ffffff;font-weight:bold;">1</span>
<span class="t" style="left:1806.00px;top:967.03px;font-size:15.8px;line-height:21px;color:#bbbbbb;letter-spacing:-0.278px;">Event Log</span>

<!-- ===== status bar ===== -->
<div style="left:0;top:990px;width:1920px;height:1px;background:#4c4b49"></div>
<div id="statusbar" style="left:0;top:991px;width:1920px;height:29px;background:#3c3f41"></div>
<svg class="i" style="left:8px;top:997px" width="20" height="20" viewBox="0 0 20 20"><path fill="none" stroke="#b1b3b4" stroke-width="1.6" d="M5 1.6H18.4V15.3H5ZM1.5 4V18.3H16"/></svg>
<span class="t" style="left:41.30px;top:996.44px;font-size:17.5px;line-height:23px;color:#bbbbbb;letter-spacing:0.030px;">Packages installed successfully: Installed packages: 'psycopg2' (39 minutes ago)</span>
<span class="t" style="left:1259.30px;top:996.44px;font-size:17.5px;line-height:23px;color:#bbbbbb;letter-spacing:0.275px;">7:14</span>
<span class="t" style="left:1311.80px;top:996.44px;font-size:17.5px;line-height:23px;color:#bbbbbb;letter-spacing:-1.275px;">CRLF</span>
<span class="t" style="left:1369.90px;top:996.44px;font-size:17.5px;line-height:23px;color:#bbbbbb;letter-spacing:-0.500px;">UTF-8</span>
<span class="t" style="left:1433.70px;top:996.44px;font-size:17.5px;line-height:23px;color:#bbbbbb;letter-spacing:-0.150px;">4 spaces</span>
<span class="t" style="left:1519.90px;top:996.44px;font-size:17.5px;line-height:23px;color:#bbbbbb;letter-spacing:0.174px;">Python 3.7 (PythonPostgresIntegration)</span>
<svg class="i" style="left:1848.5px;top:996px" width="17" height="19" viewBox="0 0 17 19"><path fill="none" stroke="#afb1b3" stroke-width="2" d="M2 8V5A4 4 0 0 1 10 5V6"/><rect x="5.5" y="8" width="11.5" height="10" fill="#afb1b3"/></svg>
<svg class="i" style="left:1885px;top:995px" width="19" height="21" viewBox="0 0 19 21"><g fill="#afb1b3"><path d="M5 0H14L15 6H4Z"/><rect x="0" y="6" width="19" height="2.2"/><path d="M3.5 9.5H15.5V14A6 6 0 0 1 3.5 14Z"/><path d="M2 21A7.5 5 0 0 1 17 21Z"/></g><circle cx="7" cy="12.5" r="1.2" fill="#3c3f41"/><circle cx="12" cy="12.5" r="1.2" fill="#3c3f41"/><path fill="none" stroke="#3c3f41" stroke-width="1" d="M7 16Q9.5 18 12 16"/></svg>

<!-- ===== OS taskbar sliver ===== -->
<div style="left:0;top:1020px;width:1920px;height:4px;background:#0c2742"></div>
<div style="left:1421px;top:1020px;width:73px;height:4px;background:#2d4d6b"></div>
<div style="left:1912px;top:1020px;width:1px;height:4px;background:#7d8a96"></div>
</body></html>
